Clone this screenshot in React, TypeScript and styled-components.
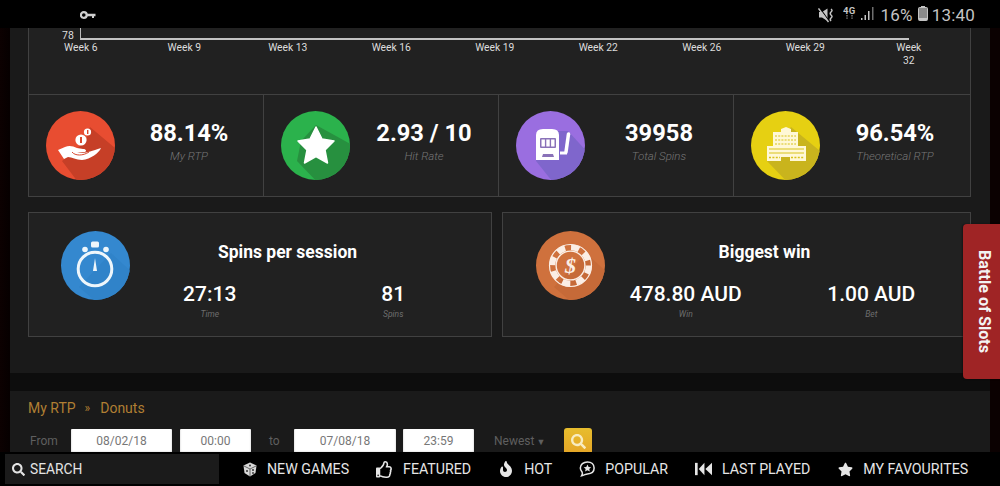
import React from 'react';
import styled, { createGlobalStyle } from 'styled-components';
import { FaSearch, FaFire, FaRegThumbsUp, FaStar } from 'react-icons/fa';

const GlobalStyle = createGlobalStyle`
  html, body {
    margin: 0;
    padding: 0;
    background: #000;
  }

  * {
    box-sizing: border-box;
  }
`;

const Screen = styled.div`
  position: relative;
  display: flex;
  flex-direction: column;
  width: 1000px;
  height: 486px;
  overflow: hidden;
  background: #000;
  font-family: Roboto, 'Liberation Sans', sans-serif;
`;

const StatusBar = styled.div`
  display: flex;
  align-items: center;
  flex: 0 0 28px;
  padding: 2px 25px 0 80px;
  color: #c4c4c4;
`;

const StatusRight = styled.div`
  display: flex;
  align-items: center;
  margin-left: auto;
`;

const StatusText = styled.span<{ $gap: number }>`
  margin-left: ${(p) => p.$gap}px;
  font-size: 17px;
  line-height: 20px;
  letter-spacing: 0.2px;
`;

const Page = styled.div`
  flex: 1;
  min-height: 0;
  overflow: hidden;
  padding: 0 10px;
  background: linear-gradient(90deg, #0c0101 0, #060000 10px, #000 10px, #000 990px, #0b0101 990px);
`;

const Panel = styled.div`
  padding: 0 19px 36px 18px;
  background: #1a1a1a;
`;

const Box = styled.div`
  background: #212121;
  border: 1px solid #414141;
`;

const ChartBox = styled.div`
  height: 67px;
  margin-bottom: -1px;
  background: #212121;
  border-left: 1px solid #414141;
  border-right: 1px solid #414141;
`;

const AxisRow = styled.div`
  display: flex;
  align-items: flex-end;
  padding-left: 33px;
  height: 12px;
`;

const AxisValue = styled.span`
  width: 18px;
  color: #ddd;
  font-size: 10.5px;
  line-height: 10px;
  margin-bottom: -1px;
`;

const Axis = styled.div`
  width: 829px;
  height: 12px;
  border-left: 1px solid #bbb;
  border-bottom: 2px solid #c4c4c4;
`;

const WeekRow = styled.div`
  display: grid;
  grid-template-columns: repeat(9, 103.5px);
  margin-top: 1px;
`;

const Week = styled.div`
  color: #ddd;
  font-size: 10.3px;
  line-height: 13px;
  text-align: center;
  padding: 0 36px;
  white-space: normal;

  &:not(:last-child) {
    padding: 0;
  }
`;

const StatsRow = styled(Box)`
  display: grid;
  grid-template-columns: 234px 235px 235px 1fr;
  height: 103px;
`;

const Stat = styled.div`
  display: flex;
  align-items: flex-start;
  padding: 16px 0 0 17px;

  & + & {
    border-left: 1px solid #414141;
  }
`;

const StatText = styled.div`
  flex: 1;
  text-align: center;
  padding-top: 8px;
`;

const StatValue = styled.div`
  color: #fff;
  font-size: 23.7px;
  font-weight: 700;
  line-height: 28px;
`;

const StatLabel = styled.div`
  margin-top: 1px;
  color: #767676;
  font-size: 11.5px;
  font-style: italic;
  font-weight: 300;
  line-height: 16px;
`;

const CardsRow = styled.div`
  display: grid;
  grid-template-columns: 464px 469px;
  gap: 10px;
  margin-top: 15px;
`;

const Card = styled(Box)<{ $inset: number }>`
  display: flex;
  align-items: flex-start;
  height: 125px;
  padding: 18px 6px 0 ${(p) => p.$inset}px;
`;

const CardIcon = styled.div`
  flex: 0 0 69px;
  margin-right: -12px;
`;

const CardBody = styled.div`
  flex: 1;
  text-align: center;
`;

const CardTitle = styled.div`
  padding: 9px 28px 0 0;
  color: #fff;
  font-size: 17.5px;
  font-weight: 700;
  line-height: 24px;
`;

const CardValues = styled.div`
  display: grid;
  grid-template-columns: 1fr 1fr;
  margin-top: 18px;
`;

const CardValue = styled.div`
  color: #fff;
  font-size: 21px;
  font-weight: 500;
  line-height: 24px;
`;

const CardLabel = styled.div`
  margin-top: 3px;
  color: #6e6e6e;
  font-size: 8.5px;
  font-style: italic;
  line-height: 11px;
`;

const Band = styled.div`
  height: 18px;
  background: #0d0d0d;
`;

const Filters = styled.div`
  height: 80px;
  padding: 8px 18px 0;
  background: #1a1a1a;
`;

const Breadcrumb = styled.div`
  display: flex;
  color: #b07f33;
  font-size: 14px;
  line-height: 18px;
`;

const Crumb = styled.span`
  margin: 0 10px 0 9px;
  font-size: 12px;
`;

const FilterRow = styled.div`
  display: flex;
  align-items: flex-start;
  margin-top: 12px;
`;

const FilterText = styled.span<{ $width: number; $left?: number }>`
  width: ${(p) => p.$width}px;
  margin-left: ${(p) => p.$left ?? 0}px;
  color: #5f5f5f;
  font-size: 12px;
  line-height: 24px;
`;

const SortArrow = styled.span`
  margin-left: 2px;
  font-size: 9px;
`;

const Field = styled.div<{ $width: number; $right: number }>`
  width: ${(p) => p.$width}px;
  height: 25px;
  margin-right: ${(p) => p.$right}px;
  border-radius: 1px;
  background: #fff;
  box-shadow: inset 0 -2px 2px #bbb;
  color: #777;
  font-size: 12px;
  line-height: 24px;
  text-align: center;
`;

const SearchButton = styled.div`
  display: flex;
  align-items: center;
  justify-content: center;
  width: 28px;
  height: 26px;
  margin: -1px 0 0 8px;
  border-radius: 3px;
  background: linear-gradient(#e7bd2e, #e5a526);
  color: #f8ecc0;
  font-size: 15px;
`;

const BottomNav = styled.div`
  display: flex;
  align-items: center;
  flex: 0 0 34px;
  padding: 2px 0 2px 5px;
  background: #000;
`;

const SearchBox = styled.div`
  display: flex;
  align-items: center;
  flex: 0 0 214px;
  height: 30px;
  padding-left: 7px;
  gap: 5px;
  background: #1b1b1b;
  color: #e4e4e4;
  font-size: 13.8px;
`;

const NavItems = styled.div`
  display: flex;
  align-items: center;
  gap: 27px;
  padding-left: 24px;
`;

const NavItem = styled.div`
  display: flex;
  align-items: center;
  gap: 10px;
  color: #e6e6e6;
  font-size: 14.2px;
  line-height: 18px;
  white-space: nowrap;

  &:last-child {
    margin-left: 1px;
  }
`;

const BattleTab = styled.div`
  position: absolute;
  top: 224px;
  right: 0;
  display: flex;
  align-items: center;
  justify-content: center;
  width: 37px;
  height: 155px;
  padding-left: 6px;
  border-radius: 4px 0 0 4px;
  background: #9f2425;
  color: #f3f3f3;
  font-size: 16.2px;
  font-weight: 700;
  writing-mode: vertical-rl;
  box-shadow: -1px 0 2px rgba(0, 0, 0, 0.4);
`;

const Badge = ({ id, fill, shade, shadow, children }: {
  id: string;
  fill: string;
  shade: string;
  shadow: string;
  children: React.ReactNode;
}) => (
  <svg width="69" height="69" viewBox="0 0 69 69" style={{ flex: '0 0 69px', display: 'block' }}>
    <defs>
      <clipPath id={id}>
        <circle cx="34.5" cy="34.5" r="34.5" />
      </clipPath>
    </defs>
    <circle cx="34.5" cy="34.5" r="34.5" fill={fill} />
    <polygon points={shadow} fill={shade} clipPath={`url(#${id})`} />
    {children}
  </svg>
);

const HandIcon = () => (
  <Badge id="c-red" fill="#e84d31" shade="#c63f27" shadow="44,16 75,42 75,75 35,75 16,50 40,30">
    <circle cx="35" cy="29" r="5.6" fill="#fff" />
    <rect x="34" y="26" width="2" height="6" fill="#d9482e" />
    <circle cx="41.5" cy="21" r="3.6" fill="#fff" />
    <rect x="41" y="19" width="1.4" height="4" fill="#d9482e" />
    <path
      d="M12 39 L19 36 C23 34 27 35 31 37 L37 38 C40 38 41 40 39 41 L31 41 C38 43 43 41 55 37 C53 42 45 48 36 49 C30 49 26 46 22 46 L18 48 Z"
      fill="#fff"
    />
    <path d="M26 41 C29 45 37 45 43 41" stroke="#d9482e" strokeWidth="1" fill="none" />
  </Badge>
);

const StarIcon = () => (
  <Badge id="c-green" fill="#2bb24c" shade="#27903f" shadow="35,14 75,36 75,75 40,75 16,50 20,30">
    <polygon
      points="35,16 41,28 53,30 44,39 46.5,52 35,45.5 23.5,52 26,39 17,30 29,28"
      fill="#fff"
      stroke="#fff"
      strokeWidth="1.5"
      strokeLinejoin="round"
    />
  </Badge>
);

const SlotIcon = () => (
  <Badge id="c-purple" fill="#9a6ee0" shade="#7f66cc" shadow="52,20 75,45 75,75 40,75 20,50 22,20">
    <path d="M20 24 Q20 18 27 18 L36 18 Q43 18 43 24 L43 49 L20 49 Z" fill="#fff" />
    <rect x="24" y="27" width="16" height="10" rx="1" fill="#8a72b8" />
    <rect x="25.5" y="28.5" width="3.4" height="7" fill="#fff" />
    <rect x="30.3" y="28.5" width="3.4" height="7" fill="#fff" />
    <rect x="35.1" y="28.5" width="3.4" height="7" fill="#fff" />
    <path d="M26 46 L27 43 L37 43 L38 46 Z" fill="#8a72b8" />
    <path d="M52.5 23 L50 41" stroke="#fff" strokeWidth="3.5" strokeLinecap="round" />
    <path d="M44 42 L51 42" stroke="#fff" strokeWidth="3" />
  </Badge>
);

const BuildingIcon = () => (
  <Badge id="c-yellow" fill="#e6d012" shade="#c9b41d" shadow="40,16 75,45 75,75 40,75 16,50 30,30">
    <path
      d="M30 21 L30 18 L35 16 L40 18 L40 21 L47 21 L47 35 L55 35 L55 50 L39 50 L39 46 L30 46 L30 50 L16 50 L16 35 L22 35 L22 21 Z"
      fill="#fff8d6"
    />
    <g stroke="#d8c21a" strokeWidth="1.1" strokeDasharray="2 1.2">
      <line x1="24" y1="25" x2="45" y2="25" />
      <line x1="24" y1="29" x2="45" y2="29" />
      <line x1="24" y1="33" x2="45" y2="33" />
    </g>
    <g stroke="#d8c21a" strokeWidth="1.2">
      <line x1="18" y1="38" x2="53" y2="38" />
      <line x1="18" y1="42" x2="53" y2="42" />
    </g>
    <g stroke="#d8c21a" strokeWidth="1.3" strokeDasharray="2 1.4">
      <line x1="18" y1="46.5" x2="29" y2="46.5" />
      <line x1="40" y1="46.5" x2="53" y2="46.5" />
    </g>
  </Badge>
);

const WatchIcon = () => (
  <Badge id="c-blue" fill="#3488cf" shade="#3083c9" shadow="50,22 75,45 75,75 40,75 18,56">
    <circle cx="34" cy="38" r="16.8" fill="none" stroke="#eef6fb" strokeWidth="3" />
    <rect x="30" y="10.5" width="8" height="6" rx="1.5" fill="#eef6fb" />
    <circle cx="24" cy="18.5" r="2.8" fill="#eef6fb" />
    <circle cx="45" cy="18.5" r="2.8" fill="#eef6fb" />
    <polygon points="34,27 36,40 32,40" fill="#eef6fb" />
  </Badge>
);

const ChipIcon = () => (
  <Badge id="c-orange" fill="#cf713d" shade="#c66a38" shadow="50,22 75,45 75,75 40,75 18,56">
    <circle cx="34.5" cy="34.5" r="21" fill="none" stroke="#fbeee5" strokeWidth="1.2" />
    <circle cx="34.5" cy="34.5" r="18.2" fill="none" stroke="#fbeee5" strokeWidth="6" strokeDasharray="8.2 6.1" />
    <circle cx="34.5" cy="34.5" r="14.4" fill="none" stroke="#fbeee5" strokeWidth="1.4" />
    <text
      x="34.5"
      y="42"
      fontFamily="'Liberation Serif', serif"
      fontSize="22"
      fontStyle="italic"
      fontWeight="700"
      fill="#fbeee5"
      textAnchor="middle"
    >
      $
    </text>
  </Badge>
);

const KeyIcon = () => (
  <svg width="16" height="10" viewBox="0 0 16 10">
    <circle cx="3.8" cy="5" r="2.9" fill="none" stroke="#cfcfcf" strokeWidth="2.2" />
    <path d="M7 3.8 H15.5 V6.2 H14 V8 H12 V6.2 H7 Z" fill="#cfcfcf" />
  </svg>
);

const MuteIcon = () => (
  <svg width="16" height="16" viewBox="0 0 16 16">
    <path d="M1 5 H4 L9.5 1.5 V14 L4 10.5 H1 Z" fill="#c4c4c4" />
    <path d="M1.5 0.5 L11 14" stroke="#000" strokeWidth="1.2" />
    <path d="M0.5 1.5 L10.5 15" stroke="#c4c4c4" strokeWidth="1.4" />
    <path d="M13 2 Q15 3.5 13 5 Q11.5 6.5 13 8 Q15 9.5 13 11 Q11.5 12.5 13 14" stroke="#c4c4c4" strokeWidth="1.5" fill="none" />
  </svg>
);

const NetworkIcon = () => (
  <svg width="14" height="16" viewBox="0 0 14 16">
    <text x="0" y="8.5" fontFamily="Roboto, sans-serif" fontSize="9.5" fontWeight="700" fill="#c4c4c4">4G</text>
    <path d="M4 10 V14 M9 10 V14" stroke="#777" strokeWidth="1.5" strokeDasharray="1.4 1" />
  </svg>
);

const SignalIcon = () => (
  <svg width="14" height="15" viewBox="0 0 14 15">
    <rect x="0" y="12" width="1.5" height="2" fill="#c4c4c4" />
    <rect x="3.5" y="9" width="1.5" height="5" fill="#c4c4c4" />
    <rect x="7" y="5" width="1.5" height="9" fill="#c4c4c4" />
    <rect x="11" y="1" width="1.5" height="13" fill="#6e6e6e" />
  </svg>
);

const BatteryIcon = () => (
  <svg width="10" height="15" viewBox="0 0 10 15">
    <rect x="3" y="0" width="4" height="2" fill="#c4c4c4" />
    <rect x="0.5" y="1.5" width="9" height="13" rx="1" fill="#8a8a8a" stroke="#c4c4c4" />
    <rect x="1" y="12" width="8" height="2.2" fill="#c4c4c4" />
  </svg>
);

const DiceIcon = () => (
  <svg width="14" height="15" viewBox="0 0 14 15">
    <polygon points="7,0.5 13.5,3.5 12.5,11 7,14.5 1.5,11 0.5,3.5" fill="#d8d8d8" />
    <path d="M7 7 L7 14 M7 7 L1 4 M7 7 L13 4" stroke="#333" strokeWidth="0.7" />
    <circle cx="4" cy="9" r="1" fill="#333" />
    <circle cx="10" cy="8" r="1" fill="#333" />
    <circle cx="10" cy="11" r="0.9" fill="#333" />
    <circle cx="7" cy="3.5" r="1" fill="#333" />
  </svg>
);

const PopularIcon = () => (
  <svg width="16" height="18" viewBox="0 0 18 19" preserveAspectRatio="xMinYMid meet">
    <path
      d="M9.5 1.5 C14 1.5 17 4.5 17 8.5 C17 12.5 14 15 9.5 15 C7.5 15 6 16.5 3 17 C4 15.5 4 14 3.5 13 C2 11.5 1.5 10 1.5 8.5 C1.5 4.5 5 1.5 9.5 1.5 Z"
      fill="none"
      stroke="#e6e6e6"
      strokeWidth="1.7"
    />
    <polygon points="9.5,4.5 10.8,7.2 13.7,7.5 11.5,9.5 12.2,12.3 9.5,10.8 6.8,12.3 7.5,9.5 5.3,7.5 8.2,7.2" fill="#e6e6e6" />
  </svg>
);

const LastPlayedIcon = () => (
  <svg width="17" height="14" viewBox="0 0 18 14">
    <rect x="0" y="0.5" width="2.8" height="13" fill="#e6e6e6" />
    <polygon points="10,0.5 10,13.5 4,7" fill="#e6e6e6" />
    <polygon points="18,0.5 18,13.5 11,7" fill="#e6e6e6" />
  </svg>
);

const weeks = ['Week 6', 'Week 9', 'Week 13', 'Week 16', 'Week 19', 'Week 22', 'Week 26', 'Week 29', 'Week 32'];

const stats = [
  { value: '88.14%', label: 'My RTP', icon: <HandIcon /> },
  { value: '2.93 / 10', label: 'Hit Rate', icon: <StarIcon /> },
  { value: '39958', label: 'Total Spins', icon: <SlotIcon /> },
  { value: '96.54%', label: 'Theoretical RTP', icon: <BuildingIcon /> },
];

const navItems = [
  { label: 'NEW GAMES', icon: <DiceIcon /> },
  { label: 'FEATURED', icon: <FaRegThumbsUp size={17} /> },
  { label: 'HOT', icon: <FaFire size={16} /> },
  { label: 'POPULAR', icon: <PopularIcon /> },
  { label: 'LAST PLAYED', icon: <LastPlayedIcon /> },
  { label: 'MY FAVOURITES', icon: <FaStar size={15} /> },
];

export default function App() {
  return (
    <Screen>
      <GlobalStyle />
      <StatusBar>
        <KeyIcon />
        <StatusRight>
          <MuteIcon />
          <StatusText as="div" $gap={9}>
            <NetworkIcon />
          </StatusText>
          <StatusText as="div" $gap={4}>
            <SignalIcon />
          </StatusText>
          <StatusText $gap={5}>16%</StatusText>
          <StatusText as="div" $gap={5}>
            <BatteryIcon />
          </StatusText>
          <StatusText $gap={4}>13:40</StatusText>
        </StatusRight>
      </StatusBar>

      <Page>
        <Panel>
          <ChartBox>
            <AxisRow>
              <AxisValue>78</AxisValue>
              <Axis />
            </AxisRow>
            <WeekRow>
              {weeks.map((week) => (
                <Week key={week}>{week}</Week>
              ))}
            </WeekRow>
          </ChartBox>

          <StatsRow>
            {stats.map((stat) => (
              <Stat key={stat.label}>
                {stat.icon}
                <StatText>
                  <StatValue>{stat.value}</StatValue>
                  <StatLabel>{stat.label}</StatLabel>
                </StatText>
              </Stat>
            ))}
          </StatsRow>

          <CardsRow>
            <Card $inset={32}>
              <CardIcon>
                <WatchIcon />
              </CardIcon>
              <CardBody>
                <CardTitle>Spins per session</CardTitle>
                <CardValues>
                  <div>
                    <CardValue>27:13</CardValue>
                    <CardLabel>Time</CardLabel>
                  </div>
                  <div>
                    <CardValue>81</CardValue>
                    <CardLabel>Spins</CardLabel>
                  </div>
                </CardValues>
              </CardBody>
            </Card>
            <Card $inset={33}>
              <CardIcon>
                <ChipIcon />
              </CardIcon>
              <CardBody>
                <CardTitle>Biggest win</CardTitle>
                <CardValues>
                  <div>
                    <CardValue>478.80 AUD</CardValue>
                    <CardLabel>Win</CardLabel>
                  </div>
                  <div>
                    <CardValue>1.00 AUD</CardValue>
                    <CardLabel>Bet</CardLabel>
                  </div>
                </CardValues>
              </CardBody>
            </Card>
          </CardsRow>
        </Panel>

        <Band />

        <Filters>
          <Breadcrumb>
            My RTP
            <Crumb>»</Crumb>
            Donuts
          </Breadcrumb>
          <FilterRow>
            <FilterText $width={41} $left={2}>From</FilterText>
            <Field $width={101} $right={8}>08/02/18</Field>
            <Field $width={71} $right={0}>00:00</Field>
            <FilterText $width={25} $left={18}>to</FilterText>
            <Field $width={102} $right={7}>07/08/18</Field>
            <Field $width={71} $right={0}>23:59</Field>
            <FilterText $width={62} $left={20}>
              Newest<SortArrow>▼</SortArrow>
            </FilterText>
            <SearchButton>
              <FaSearch />
            </SearchButton>
          </FilterRow>
        </Filters>
      </Page>

      <BottomNav>
        <SearchBox>
          <FaSearch size={13} />
          SEARCH
        </SearchBox>
        <NavItems>
          {navItems.map((item) => (
            <NavItem key={item.label}>
              {item.icon}
              {item.label}
            </NavItem>
          ))}
        </NavItems>
      </BottomNav>

      <BattleTab>Battle of Slots</BattleTab>
    </Screen>
  );
}
